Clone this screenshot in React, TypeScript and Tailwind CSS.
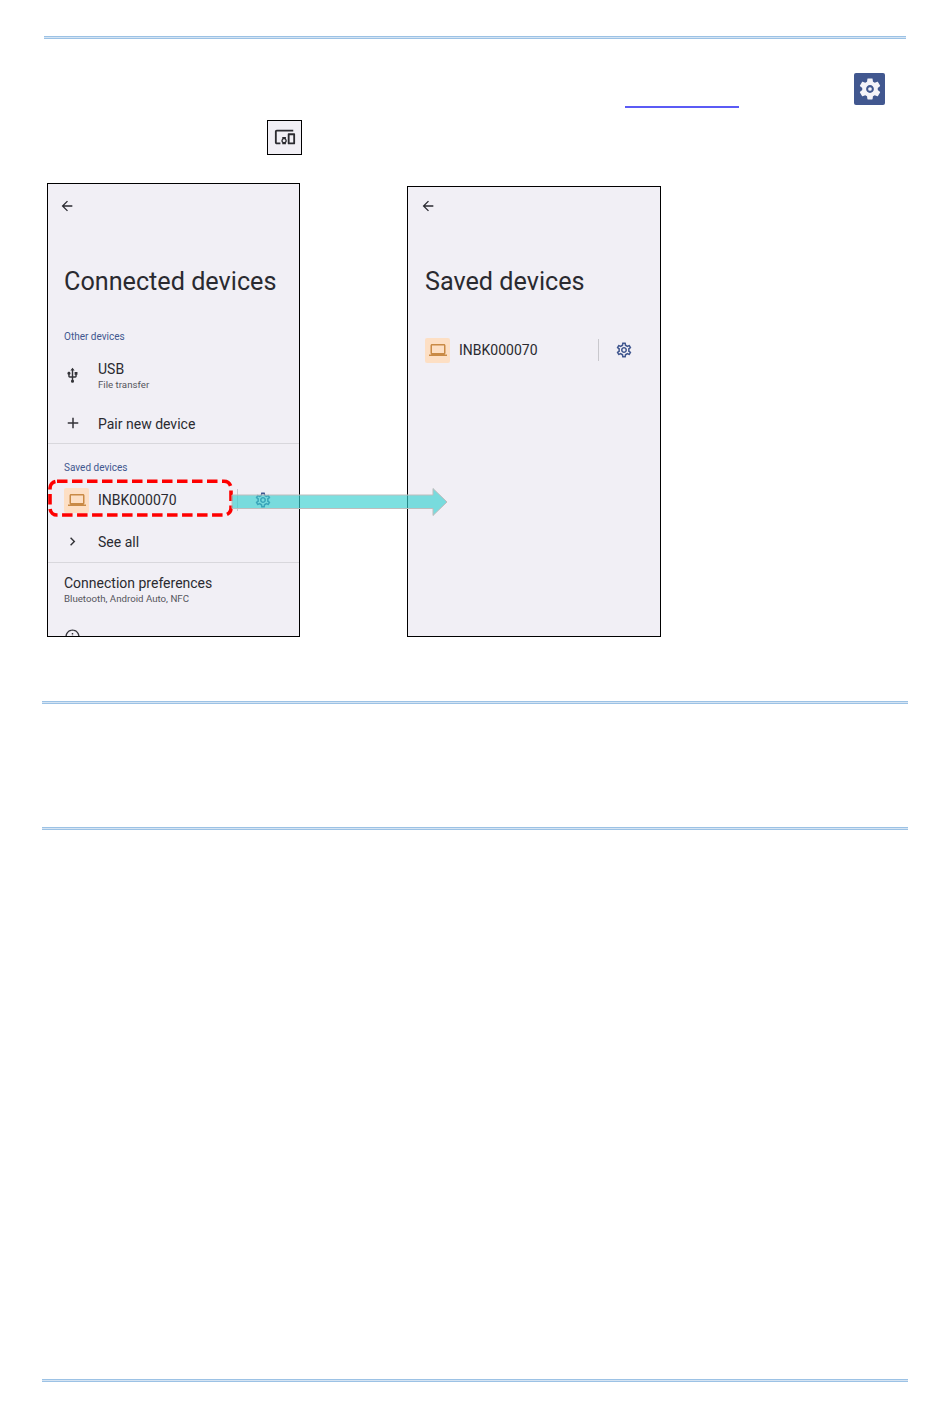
import {
  MdAdd,
  MdArrowBack,
  MdChevronRight,
  MdLaptop,
  MdOutlineDevicesOther,
  MdOutlineInfo,
  MdOutlineSettings,
  MdUsb,
} from "react-icons/md";

function Rule({ className }: { className: string }) {
  return (
    <div
      className={`h-[3px] shrink-0 border-y border-[#9cc2e5] bg-[#d5e4f3] ${className}`}
    />
  );
}

function DeviceRow() {
  return (
    <div className="flex h-[26px] items-center pr-[27px] pl-[16px]">
      <div className="flex h-[25px] w-[25px] items-center justify-center rounded-[2px] bg-[#fddfc4]">
        <MdLaptop className="h-[18px] w-[18px] text-[#c98a45]" />
      </div>
      <span className="ml-[9px] flex-1 pt-px text-[14px] text-[#2a2a30]">
        INBK000070
      </span>
      <div className="h-[22px] w-px bg-[#c9c8cd]" />
      <MdOutlineSettings className="ml-[16px] h-[18px] w-[18px] text-[#41578f]" />
    </div>
  );
}

function IconRow({
  icon,
  children,
}: {
  icon: React.ReactNode;
  children: React.ReactNode;
}) {
  return (
    <div className="flex items-center pl-[16px]">
      <div className="mb-[2px] flex w-[34px] shrink-0 items-center">{icon}</div>
      {children}
    </div>
  );
}

function ConnectedDevices() {
  return (
    <div className="h-[454px] w-[253px] shrink-0 overflow-hidden border border-black bg-[#f1eff5]">
      <div className="flex h-[44px] items-center pl-[11px]">
        <MdArrowBack className="h-[16px] w-[16px] text-[#2a2a30]" />
      </div>
      <h1 className="mt-[29px] flex h-[50px] items-center pl-[16px] text-[25.2px] text-[#2a2a30]">
        Connected devices
      </h1>
      <div className="mt-[21px] flex h-[16px] items-center pl-[16px] text-[10px] text-[#41578f]">
        Other devices
      </div>
      <div className="mt-[16px] h-[33px]">
        <IconRow icon={<MdUsb className="h-[17px] w-[17px] text-[#333338]" />}>
          <div>
            <div className="text-[14px] leading-[18px] text-[#2a2a30]">USB</div>
            <div className="text-[9.7px] leading-[14px] text-[#55555c]">
              File transfer
            </div>
          </div>
        </IconRow>
      </div>
      <div className="mt-[19px] h-[24px]">
        <IconRow icon={<MdAdd className="h-[18px] w-[18px] text-[#333338]" />}>
          <span className="text-[14px] leading-[24px] text-[#2a2a30]">
            Pair new device
          </span>
        </IconRow>
      </div>
      <div className="mt-[7px] h-px bg-[#d8d7dc]" />
      <div className="mt-[15px] flex h-[16px] items-center pl-[16px] text-[10px] text-[#41578f]">
        Saved devices
      </div>
      <div className="mt-[12px]">
        <DeviceRow />
      </div>
      <div className="mt-[17px] h-[24px]">
        <IconRow
          icon={<MdChevronRight className="h-[17px] w-[17px] text-[#333338]" />}
        >
          <span className="text-[14px] leading-[24px] text-[#2a2a30]">
            See all
          </span>
        </IconRow>
      </div>
      <div className="mt-[8px] h-px bg-[#d8d7dc]" />
      <div className="mt-[12px] pl-[16px] text-[14px] leading-[16px] text-[#2a2a30]">
        Connection preferences
      </div>
      <div className="mt-px pl-[16px] text-[9.7px] leading-[14px] text-[#55555c]">
        Bluetooth, Android Auto, NFC
      </div>
      <div className="mt-[22px] pl-[16px]">
        <MdOutlineInfo className="h-[17px] w-[17px] text-[#333338]" />
      </div>
    </div>
  );
}

function SavedDevices() {
  return (
    <div className="h-[451px] w-[254px] shrink-0 overflow-hidden border border-black bg-[#f1eff5]">
      <div className="flex h-[38px] items-center pl-[12px]">
        <MdArrowBack className="h-[16px] w-[16px] text-[#2a2a30]" />
      </div>
      <h1 className="mt-[32px] flex h-[50px] items-center pl-[17px] text-[25.2px] text-[#2a2a30]">
        Saved devices
      </h1>
      <div className="mt-[30px] pl-px">
        <DeviceRow />
      </div>
    </div>
  );
}

export default function App() {
  return (
    <div className="relative flex h-[1419px] w-[950px] flex-col overflow-hidden bg-white pt-[36px] font-['Roboto',sans-serif]">
      <Rule className="ml-[44px] w-[862px]" />

      <div className="mt-[34px] flex h-[32px] items-end pr-[65px]">
        <div className="mb-[-3px] ml-[625px] h-[2px] w-[114px] bg-[#5b5bf5]" />
        <div className="ml-auto flex h-[32px] w-[31px] items-center justify-center rounded-[2px] bg-[#41578f]">
          <svg viewBox="0 0 24 24" className="h-[26px] w-[26px]" fill="#f4f3f8">
            <path d="M19.14,12.94c0.04-0.3,0.06-0.61,0.06-0.94c0-0.32-0.02-0.64-0.07-0.94l2.03-1.58c0.18-0.14,0.23-0.41,0.12-0.61 l-1.92-3.32c-0.12-0.22-0.37-0.29-0.59-0.22l-2.39,0.96c-0.5-0.38-1.03-0.7-1.62-0.94L14.4,2.81c-0.04-0.24-0.24-0.41-0.48-0.41 h-3.84c-0.24,0-0.43,0.17-0.47,0.41L9.25,5.35C8.66,5.59,8.12,5.92,7.63,6.29L5.24,5.33c-0.22-0.08-0.47,0-0.59,0.22L2.74,8.87 C2.62,9.08,2.66,9.34,2.86,9.48l2.03,1.58C4.84,11.36,4.8,11.69,4.8,12s0.02,0.64,0.07,0.94l-2.03,1.58 c-0.18,0.14-0.23,0.41-0.12,0.61l1.92,3.32c0.12,0.22,0.37,0.29,0.59,0.22l2.39-0.96c0.5,0.38,1.03,0.7,1.62,0.94l0.36,2.54 c0.05,0.24,0.24,0.41,0.48,0.41h3.84c0.24,0,0.44-0.17,0.47-0.41l0.36-2.54c0.59-0.24,1.13-0.56,1.62-0.94l2.39,0.96 c0.22,0.08,0.47,0,0.59-0.22l1.92-3.32c0.12-0.22,0.07-0.47-0.12-0.61L19.14,12.94z M12,15.6c-1.98,0-3.6-1.62-3.6-3.6 s1.62-3.6,3.6-3.6s3.6,1.62,3.6,3.6S13.98,15.6,12,15.6z" />
            <circle cx="12" cy="12" r="1.7" />
          </svg>
        </div>
      </div>

      <div className="mt-[15px] ml-[267px] flex h-[35px] w-[35px] items-center justify-center border border-black bg-[#f1eff5] pb-[2px]">
        <MdOutlineDevicesOther className="h-[22px] w-[22px] text-[#2b2b30]" />
      </div>

      <div className="mt-[28px] ml-[47px] flex items-end gap-[107px]">
        <ConnectedDevices />
        <SavedDevices />
      </div>

      <Rule className="mt-[64px] ml-[42px] w-[866px]" />
      <Rule className="mt-[123px] ml-[42px] w-[866px]" />
      <Rule className="mt-[549px] ml-[42px] w-[866px]" />

      {/* callout drawn over the left screenshot */}
      <svg
        className="absolute top-[475px] left-[45px]"
        width="410"
        height="50"
        viewBox="0 0 410 50"
        fill="none"
      >
        <rect
          x="5"
          y="6.3"
          width="181"
          height="33.7"
          rx="7"
          stroke="#fe0000"
          strokeWidth="3.6"
          strokeDasharray="10.5 4.5"
        />
        <polygon
          points="187,20 388,20 388,13.5 402,27 388,40.5 388,33.5 187,33.5"
          fill="#38cfd0"
          fillOpacity="0.65"
          stroke="#bdbdbd"
        />
      </svg>
    </div>
  );
}
